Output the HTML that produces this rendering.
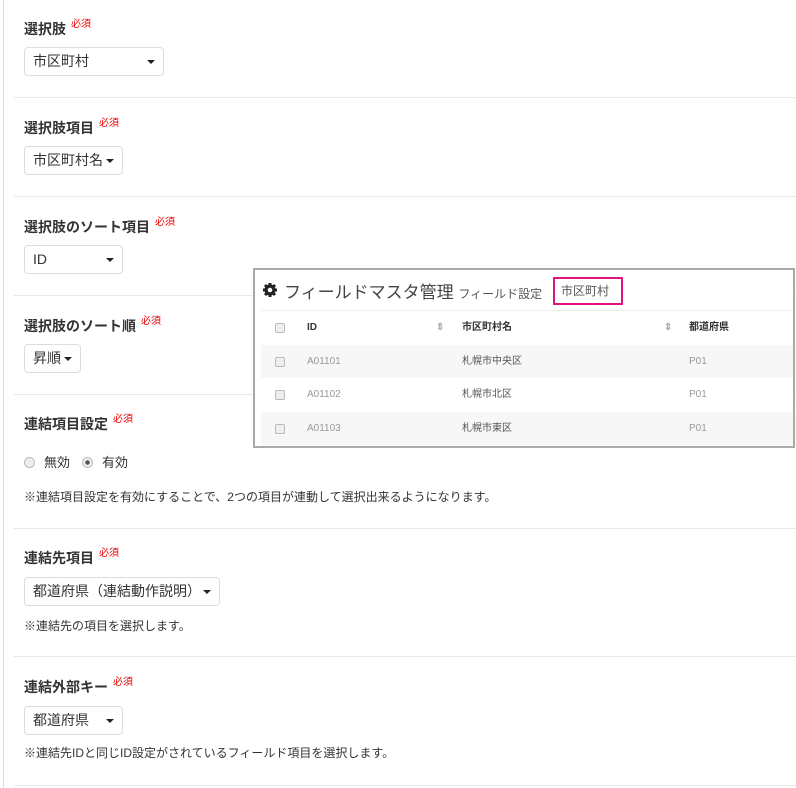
<!DOCTYPE html>
<html><head><meta charset="utf-8"><style>
body{margin:0;width:796px;height:788px;background:#fff;position:relative;overflow:hidden;font-family:"Liberation Sans","Noto Sans CJK JP",sans-serif;color:#333}
.vl{position:absolute;left:3px;top:0;width:1px;height:788px;background:#ddd}
.hr{position:absolute;left:14px;right:0;height:1px;background:#e8e8e8}
.lb{position:absolute;left:24px;font-size:14px;font-weight:bold;line-height:18px}
.lb span{color:#e00;font-size:10px;font-weight:normal;vertical-align:top;margin-left:5px;position:relative;top:-4px}
.sel{position:absolute;left:24px;height:27px;border:1px solid #ddd;border-radius:4px;font-size:14px;line-height:27px;padding-left:8px;box-sizing:content-box}
.sel i{position:absolute;right:8px;top:12px;width:0;height:0;border-left:4px solid transparent;border-right:4px solid transparent;border-top:4px solid #222}
.t{position:absolute;left:24px;font-size:12px;line-height:16px}
.ov{position:absolute;left:253px;top:268px;width:538px;height:176px;border:2px solid #aaa;background:#fff}
.ov .r{position:absolute;left:6px;right:0;height:33px;font-size:10px;color:#999}
.cb{position:absolute;left:14px;top:12px;width:8px;height:8px;border:1px solid #bbb;border-radius:2px;background:#eee}
.r span{position:absolute;top:0;line-height:33px}
.rd{position:absolute;top:457px;width:11px;height:11px;border:1px solid #bbb;border-radius:50%;background:#eee;box-sizing:border-box}
</style></head><body>
<div class="vl"></div>
<div class="lb" style="top:20px">選択肢<span>必須</span></div>
<div class="sel" style="top:47px;width:130px">市区町村<i></i></div>
<div class="hr" style="top:97px"></div>
<div class="lb" style="top:119px">選択肢項目<span>必須</span></div>
<div class="sel" style="top:146px;width:89px">市区町村名<i></i></div>
<div class="hr" style="top:196px"></div>
<div class="lb" style="top:218px">選択肢のソート項目<span>必須</span></div>
<div class="sel" style="top:245px;width:89px">ID<i></i></div>
<div class="hr" style="top:295px"></div>
<div class="lb" style="top:317px">選択肢のソート順<span>必須</span></div>
<div class="sel" style="top:344px;width:47px">昇順<i></i></div>
<div class="hr" style="top:394px"></div>
<div class="lb" style="top:415px">連結項目設定<span>必須</span></div>
<div class="rd" style="left:24px"></div>
<div style="position:absolute;top:455px;left:44px;font-size:13px;line-height:16px">無効</div>
<div class="rd" style="left:82px;background:radial-gradient(#555 30%,#eee 40%)"></div>
<div style="position:absolute;top:455px;left:102px;font-size:13px;line-height:16px">有効</div>
<div class="t" style="top:489px">※連結項目設定を有効にすることで、2つの項目が連動して選択出来るようになります。</div>
<div class="hr" style="top:528px"></div>
<div class="lb" style="top:549px">連結先項目<span>必須</span></div>
<div class="sel" style="top:577px;width:186px">都道府県（連結動作説明）<i></i></div>
<div class="t" style="top:618px">※連結先の項目を選択します。</div>
<div class="hr" style="top:656px"></div>
<div class="lb" style="top:678px">連結外部キー<span>必須</span></div>
<div class="sel" style="top:706px;width:89px">都道府県<i></i></div>
<div class="t" style="top:745px">※連結先IDと同じID設定がされているフィールド項目を選択します。</div>
<div class="hr" style="top:785px"></div>

<div class="ov">
<svg style="position:absolute;left:7px;top:12px" width="16" height="16" viewBox="0 0 16 16"><g fill="#222"><circle cx="8" cy="8" r="5.5"/><g stroke="#222" stroke-width="3"><line x1="8" y1="1" x2="8" y2="15"/><line x1="1" y1="8" x2="15" y2="8"/><line x1="3" y1="3" x2="13" y2="13"/><line x1="13" y1="3" x2="3" y2="13"/></g></g><circle cx="8" cy="8" r="2.3" fill="#fff"/></svg>
<div style="position:absolute;left:29px;top:8px;font-size:17px;color:#444;white-space:nowrap">フィールドマスタ管理 <span style="font-size:12px;color:#555">フィールド設定</span></div>
<div style="position:absolute;left:298px;top:7px;width:70px;height:28px;border:2px solid #e0147f;box-sizing:border-box;font-size:12px;color:#555;line-height:24px;padding-left:6px">市区町村</div>
<div style="position:absolute;left:6px;right:0;top:40px;height:1px;background:#eee"></div>
<div class="r" style="top:41px;color:#333;font-weight:bold"><div class="cb"></div><span style="left:46px">ID</span><span style="left:175px;color:#aaa">⇕</span><span style="left:201px">市区町村名</span><span style="left:403px;color:#aaa">⇕</span><span style="left:428px">都道府県</span></div>
<div class="r" style="top:75px;background:#f7f7f7"><div class="cb"></div><span style="left:46px">A01101</span><span style="left:201px;color:#555">札幌市中央区</span><span style="left:428px">P01</span></div>
<div class="r" style="top:108px"><div class="cb"></div><span style="left:46px">A01102</span><span style="left:201px;color:#555">札幌市北区</span><span style="left:428px">P01</span></div>
<div class="r" style="top:142px;background:#f7f7f7"><div class="cb"></div><span style="left:46px">A01103</span><span style="left:201px;color:#555">札幌市東区</span><span style="left:428px">P01</span></div>
</div>
</body></html>
